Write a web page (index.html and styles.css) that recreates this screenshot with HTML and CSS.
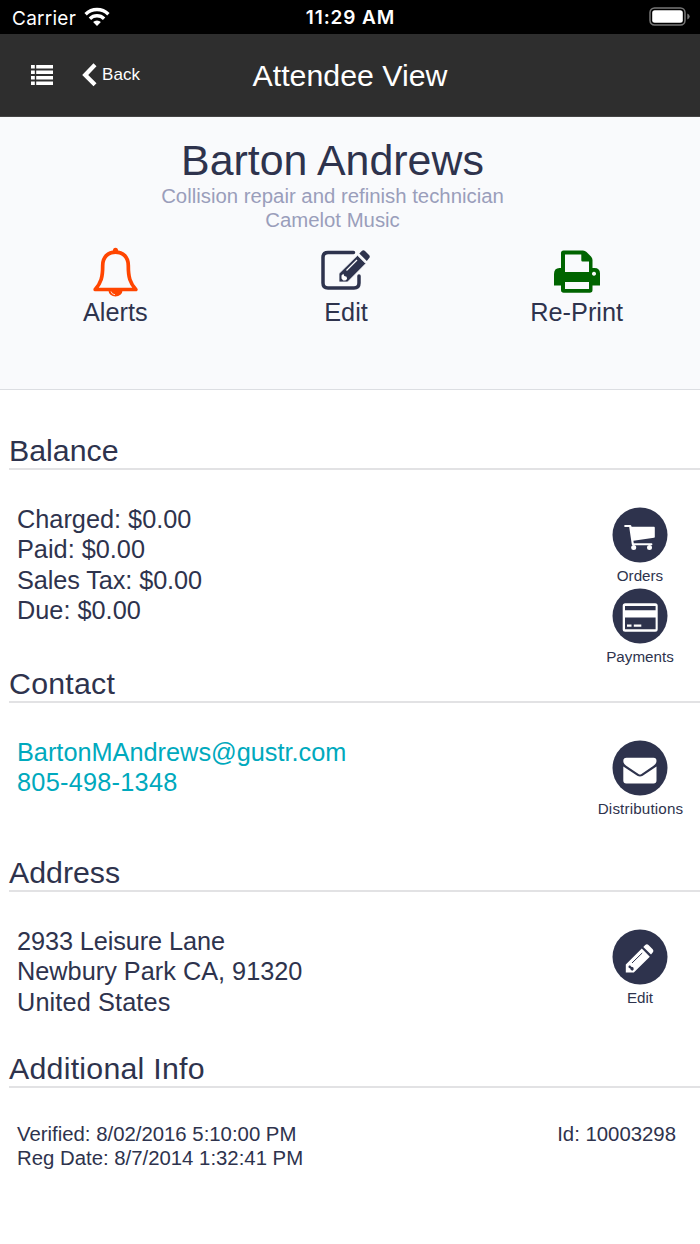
FILE: index.html
```html
<!DOCTYPE html>
<html lang="en">
<head>
<meta charset="utf-8">
<title>Attendee View</title>
<link rel="stylesheet" href="styles.css">
</head>
<body>
<div class="status">
  <div class="carrier"><span>Carrier</span>
    <svg width="26" height="20" viewBox="0 0 26 20" fill="none" stroke="#fff" stroke-width="3.4"><path d="M1.6 7.2a16.3 16.3 0 0 1 22.8 0M5.9 11.7a10.2 10.2 0 0 1 14.2 0"/><path d="M13 19l-3.9-4a5.6 5.6 0 0 1 7.8 0z" fill="#fff" stroke="none"/></svg>
  </div>
  <div class="clock">11:29 AM</div>
  <svg class="battery" width="42" height="20" viewBox="0 0 42 20"><rect x="1" y="1" width="35" height="17" rx="4.5" fill="none" stroke="#777" stroke-width="1.5"/><rect x="3.2" y="3.2" width="30.6" height="12.6" rx="2.5" fill="#fff"/><path d="M38.3 6.5q2.4 1 2.4 3t-2.4 3z" fill="#777"/></svg>
</div>
<header class="navbar">
  <div class="nav-left">
    <svg class="list" width="22" height="20" viewBox="0 0 22 20" fill="#fff"><path d="M0 0h3.8v3.4H0zM5.2 0H22v3.4H5.2zM0 5.5h3.8v3.4H0zM5.2 5.5H22v3.4H5.2zM0 11h3.8v3.4H0zM5.2 11H22v3.4H5.2zM0 16.5h3.8v3.4H0zM5.2 16.5H22v3.4H5.2z"/></svg>
    <svg class="chevron" width="15" height="24" viewBox="0 0 15 24" fill="#fff"><path d="M11.5.3l3 3L6.2 11.9l8.3 8.4-3 3L.2 11.9z"/></svg>
    <span class="back">Back</span>
  </div>
  <h1 class="nav-title">Attendee View</h1>
</header>
<section class="hero">
  <div class="person">
    <div class="name">Barton Andrews</div>
    <div class="role">Collision repair and refinish technician</div>
    <div class="company">Camelot Music</div>
  </div>
  <div class="actions">
    <div class="action">
      <svg class="bell" width="48" height="50" viewBox="0 0 48 50"><path d="M3.2 42.5C9 36 10.700 30.500 10.700 18.500C10.700 10 16 5.200 23.500 5.200S36.300 10 36.300 18.500C36.300 30.500 38 36 43.800 42.500z" fill="none" stroke="#ff4500" stroke-width="3.700" stroke-linejoin="round"/><path d="M21 5V3.200a2.500 2.500 0 0 1 5 0V5zM16.500 43.500h14a7 6 0 0 1-14 0z" fill="#ff4500"/><path d="M19 44.500q.8 3 4 3.200" fill="none" stroke="#fff" stroke-width=".8"/></svg>
      <span class="label">Alerts</span>
    </div>
    <div class="action">
      <svg class="edit-icon" width="50" height="50" viewBox="0 0 50 50"><path d="M33.500 5.500H8q-5 0-5 5v25.500q0 5 5 5h26q5 0 5-5v-7" fill="none" stroke="#2e334d" stroke-width="3.500" stroke-linecap="round"/><path d="M19 35v-8.500L37.500 8.300 45.800 16.600 27.500 35z" fill="#2e334d" stroke="#f9fafc" stroke-width=".8"/><path d="M39.300 6.500l2.500-2.400q1.600-1.500 3.200 0l4 4q1.600 1.600 0 3.200L46.800 14z" fill="#2e334d"/><path d="M26.500 23.500L37 13" stroke="#fff" stroke-width="1.300"/><path d="M21.500 31.500v-3l1.800-1.700 1 2.200 2.300.7.500 2.300-1.700 1.500h-2.200z" fill="#fff"/></svg>
      <span class="label">Edit</span>
    </div>
    <div class="action">
      <svg width="46" height="50" viewBox="0 0 46 50"><path fill="#006400" fill-rule="evenodd" d="M7 20V6q0-2.500 2.500-2.500h19.500q2 0 3.500 1.500l4.500 4.500q1.500 1.500 1.500 3.500V21h2q5.500 0 5.500 5.500V38.500h-7.500V43q0 2.700-2.700 2.700H9.700Q7 45.700 7 43v-4.500H0V27q0-6 5.500-6H7zM11 7.500V25h24V14.500h-6.500q-1.200 0-1.200-1.200v-5.800zM11 35v7h24v-7zM40 24.700a2 2 0 1 0 .01 0z"/></svg>
      <span class="label">Re-Print</span>
    </div>
  </div>
</section>
<main>
  <section class="block balance">
    <h2 class="tight">Balance</h2>
    <div class="content">
      <div class="lines"><div>Charged: $0.00</div><div>Paid: $0.00</div><div class="tax">Sales Tax: $0.00</div><div>Due: $0.00</div></div>
      <div class="side">
        <div class="tool"><svg width="56" height="56" viewBox="0 0 56 56"><circle cx="28" cy="28" r="27.500" fill="#2e334d"/><path d="M13 18h5.200q.9 0 1.100.8l.3 1H42q.8 0 .8.900V30q0 .7-.8.800L21.400 33.800l.4 2.500H39.500q.9 0 .9 1t-.9 1H20.700q-.8 0-.9-.8L17.200 20H13q-.8 0-.8-1t.8-1z" fill="#fff"/><circle cx="21.700" cy="40.600" r="2.500" fill="#fff"/><circle cx="37.500" cy="40.600" r="2.500" fill="#fff"/></svg><span>Orders</span></div>
        <div class="tool"><svg width="56" height="56" viewBox="0 0 56 56"><circle cx="28" cy="28" r="27.500" fill="#2e334d"/><path fill="#fff" fill-rule="evenodd" d="M13.200 15.200h30q2.500 0 2.500 2.500v23.500q0 2.500-2.500 2.500h-30q-2.500 0-2.500-2.500V17.700q0-2.500 2.500-2.500zM13 18v4.300h30.600V18zM13 29.500v11.700h30.600V29.500zM15 36.500h4.500v2.300H15zM21.800 36.500h7.500v2.300h-7.500z"/></svg><span>Payments</span></div>
      </div>
    </div>
  </section>
  <section class="block contact">
    <h2>Contact</h2>
    <div class="content">
      <div class="lines teal"><div>BartonMAndrews@gustr.com</div><div class="phone">805-498-1348</div></div>
      <div class="side"><div class="tool"><svg width="56" height="56" viewBox="0 0 56 56"><circle cx="28" cy="28" r="27.500" fill="#2e334d"/><path fill="#fff" d="M14.500 17.700h27q3 0 3 3.300 0 2.800-3 4.800L29.500 34q-1.500 1.200-3 0l-12.300-8.200q-2.900-2-2.900-4.800 0-3.300 3.200-3.300zM11.300 26.500l14 9.300q2.700 1.500 5.400 0L44.500 26.500V40.500q0 3-3 3H14.300q-3 0-3-3z"/></svg><span class="wide">Distributions</span></div></div>
    </div>
  </section>
  <section class="block address">
    <h2 class="tight">Address</h2>
    <div class="content">
      <div class="lines"><div class="street">2933 Leisure Lane</div><div>Newbury Park CA, 91320</div><div class="country">United States</div></div>
      <div class="side"><div class="tool"><svg width="56" height="56" viewBox="0 0 56 56"><circle cx="28" cy="28" r="27.500" fill="#2e334d"/><path fill="#fff" d="M13.800 43.600V35.500L29.800 19.500 37.800 27.700 21.800 43.600zM31.300 18l1.900-1.900q1.700-1.600 3.300 0l4.200 4.200q1.600 1.600 0 3.300l-1.700 1.800z"/><path d="M20 34L30.200 24" stroke="#2e334d" stroke-width="1"/><path d="M16.500 37l1.500-.7 1.200 1.500 2 .4.600 2-1.300 1.500-1.700-.7-.5-1.600-1.600-.7z" fill="#2e334d"/></svg><span>Edit</span></div></div>
    </div>
  </section>
  <section class="block info">
    <h2>Additional Info</h2>
    <div class="meta">
      <div><div>Verified: 8/02/2016 5:10:00 PM</div><div>Reg Date: 8/7/2014 1:32:41 PM</div></div>
      <div>Id: 10003298</div>
    </div>
  </section>
</main>
</body>
</html>
```
FILE: styles.css
```css
* { box-sizing: border-box; }
body {
  margin: 0;
  width: 700px;
  height: 1244px;
  overflow: hidden;
  background: #fff;
  color: #2e334d;
  font-family: "Liberation Sans", Arial, sans-serif;
}
svg { display: block; flex: none; }
h1, h2 { margin: 0; font-weight: 400; }
.status {
  display: grid;
  grid-template-columns: 1fr auto 1fr;
  align-items: center;
  height: 34px;
  padding: 0 9px 0 12px;
  background: #000;
  color: #fff;
  font-family: Inter, sans-serif;
  font-size: 19px;
}
.carrier { display: flex; align-items: center; gap: 8px; padding-top: 2px; letter-spacing: .25px; }
.carrier svg { margin-top: -3px; }
.clock { font-weight: 600; font-size: 19px; letter-spacing: .9px; padding: 1px 2px 0 0; }
.battery { justify-self: end; }
.navbar {
  display: grid;
  grid-template-columns: 1fr auto 1fr;
  align-items: center;
  height: 83px;
  background: #2e2e2e;
  border-bottom: 1px solid #444;
  color: #fff;
}
.nav-left { display: flex; align-items: center; padding-left: 31px; }
.list { margin-top: -1px; }
.chevron { margin-left: 29px; }
.back { margin: -1px 0 0 5px; font-size: 17px; letter-spacing: .1px; }
.nav-title { padding-top: 2px; font-size: 30.300px; white-space: nowrap; }
.hero {
  height: 273px;
  padding-top: 19px;
  background: #f9fafc;
  border-bottom: 1px solid #dcdee2;
}
.person { width: 665px; text-align: center; white-space: nowrap; }
.name { font-size: 42.900px; line-height: 48px; }
.role, .company { font-size: 20.350px; line-height: 24px; color: #9a9ebb; }
.actions { display: grid; grid-template-columns: repeat(3, 1fr); width: 692px; padding-top: 15px; }
.action { display: flex; flex-direction: column; align-items: center; }
.bell { margin-left: 1px; }
.edit-icon { margin-left: -1px; }
.label { font-size: 25.300px; line-height: 31px; }
.block h2 {
  height: 39px;
  margin-left: 9px;
  border-bottom: 2px solid #e2e2e4;
  font-size: 30.300px;
  line-height: 40px;
  letter-spacing: .25px;
}
.block .tight { letter-spacing: 0; }
.balance { height: 233px; }
.contact { height: 189px; }
.address { height: 196px; }
main { padding-top: 41px; }
.content { display: flex; justify-content: space-between; padding: 34px 8px 0 17px; }
.lines { font-size: 25.300px; line-height: 30.400px; }
.teal { color: #00a9bd; }
.phone { letter-spacing: .25px; }
.tax, .street { letter-spacing: -.1px; }
.country { letter-spacing: .12px; }
.side { width: 104px; padding-top: 3px; }
.tool { display: flex; flex-direction: column; align-items: center; height: 81px; }
.tool span { font-size: 15.200px; line-height: 26px; }
.tool .wide { margin-left: 1px; letter-spacing: .150px; }
.meta {
  display: flex;
  justify-content: space-between;
  padding: 34px 24px 0 17px;
  font-size: 20.350px;
  line-height: 24px;
}
```
